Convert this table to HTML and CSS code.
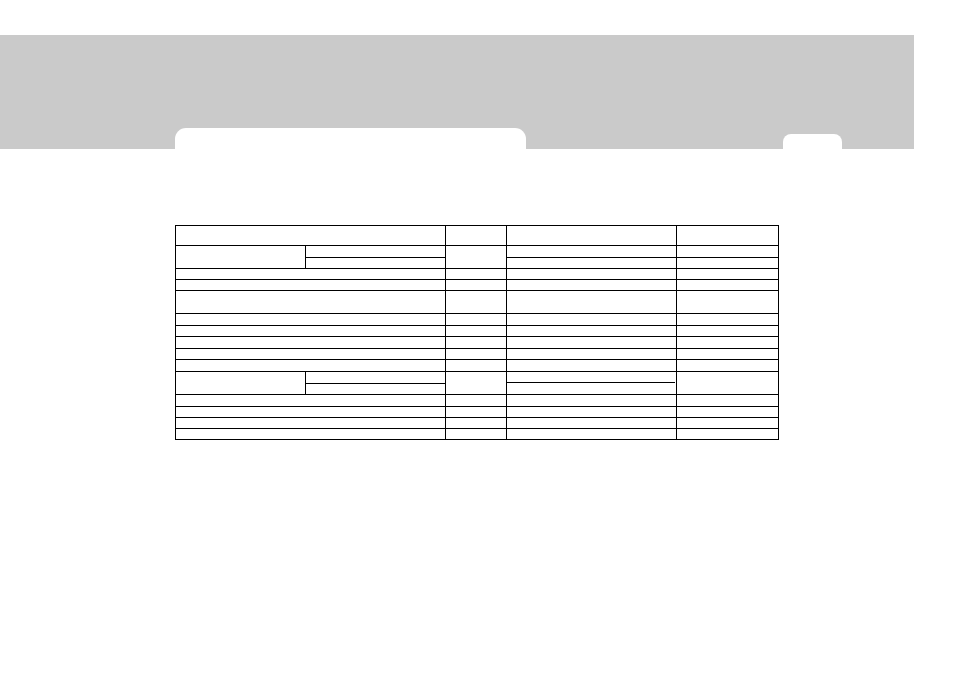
FILE: index.html
```html
<!DOCTYPE html>
<html>
<head>
<meta charset="utf-8">
<link rel="stylesheet" href="styles.css">
</head>
<body>
<header class="band">
  <div class="tab tab-main"></div>
  <div class="tab tab-small"></div>
</header>
<main class="content">
  <table class="spec">
    <colgroup>
      <col class="c1"><col class="c2"><col class="c3"><col class="c4"><col class="c5">
    </colgroup>
    <tr class="h20"><td colspan="2"></td><td></td><td></td><td></td></tr>
    <tr class="h12"><td rowspan="2"></td><td></td><td rowspan="2"></td><td></td><td></td></tr>
    <tr class="h11"><td></td><td></td><td></td></tr>
    <tr class="h11"><td colspan="2"></td><td></td><td></td><td></td></tr>
    <tr class="h11"><td colspan="2"></td><td></td><td></td><td></td></tr>
    <tr class="h23"><td colspan="2"></td><td></td><td></td><td></td></tr>
    <tr class="h12"><td colspan="2"></td><td></td><td></td><td></td></tr>
    <tr class="h11"><td colspan="2"></td><td></td><td></td><td></td></tr>
    <tr class="h12"><td colspan="2"></td><td></td><td></td><td></td></tr>
    <tr class="h11"><td colspan="2"></td><td></td><td></td><td></td></tr>
    <tr class="h12"><td colspan="2"></td><td></td><td></td><td></td></tr>
    <tr class="h12"><td rowspan="2"></td><td></td><td rowspan="2"></td><td class="split"><div class="splitline"></div></td><td rowspan="2"></td></tr>
    <tr class="h11"><td></td><td></td></tr>
    <tr class="h12"><td colspan="2"></td><td></td><td></td><td></td></tr>
    <tr class="h11"><td colspan="2"></td><td></td><td></td><td></td></tr>
    <tr class="h11"><td colspan="2"></td><td></td><td></td><td></td></tr>
    <tr class="h11"><td colspan="2"></td><td></td><td></td><td></td></tr>
  </table>
</main>
</body>
</html>
```

FILE: styles.css
```css
html, body {
  margin: 0;
  padding: 0;
  background: #ffffff;
  font-family: "Liberation Sans", Arial, sans-serif;
}

.band {
  margin-top: 35px;
  width: 914px;
  height: 114px;
  background: #cacaca;
  display: flex;
  align-items: flex-end;
}

.tab {
  background: #ffffff;
}

.tab-main {
  margin-left: 175px;
  width: 351px;
  height: 21px;
  border-radius: 11px 11px 0 0;
}

.tab-small {
  margin-left: 257px;
  width: 59px;
  height: 15px;
  border-radius: 8px 8px 0 0;
}

.content {
  padding: 76px 0 0 175px;
}

.spec {
  table-layout: fixed;
  width: 603px;
  border-collapse: separate;
  border-spacing: 0;
  border-top: 1px solid #000;
  border-left: 1px solid #000;
  font-size: 0;
  line-height: 0;
}

.spec td {
  box-sizing: border-box;
  padding: 0;
  border-right: 1px solid #000;
  border-bottom: 1px solid #000;
}

.c1 { width: 130px; }
.c2 { width: 140px; }
.c3 { width: 61px; }
.c4 { width: 170px; }
.c5 { width: 102px; }

.h11 { height: 11px; }
.h12 { height: 12px; }
.h20 { height: 20px; }
.h23 { height: 23px; }

.spec td.split {
  border-bottom: none;
  vertical-align: top;
}

.splitline {
  box-sizing: border-box;
  height: 11px;
  margin-right: 1px;
  border-bottom: 1px solid #000;
}
```
